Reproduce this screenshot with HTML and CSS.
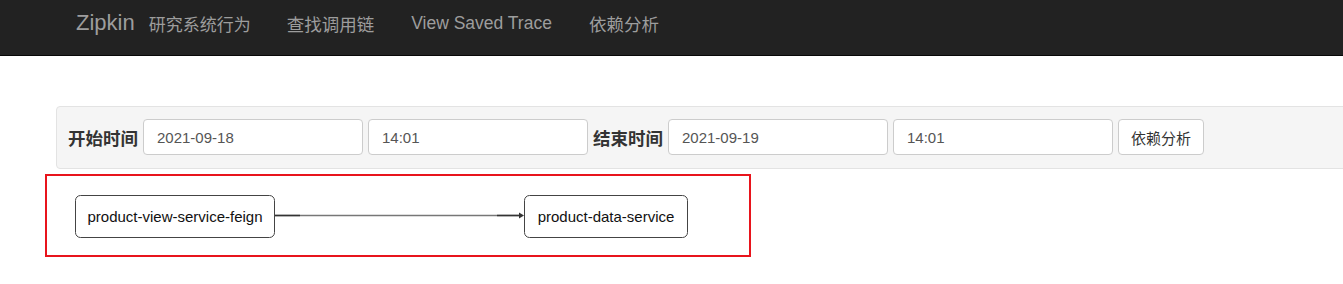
FILE: index.html
```html
<!DOCTYPE html>
<html lang="zh-CN">
<head>
    <meta charset="UTF-8">
    <title>Zipkin - 依赖分析</title>
    <link rel="stylesheet" href="styles.css">
</head>
<body>
<div class="navbar">
    <a class="brand" href="#">Zipkin</a>
    <span class="brand-sub">研究系统行为</span>
    <a class="nav-link" href="#">查找调用链</a>
    <a class="nav-link" href="#">View Saved Trace</a>
    <a class="nav-link" href="#">依赖分析</a>
</div>

<div class="filter-panel">
    <label class="filter-label">开始时间</label>
    <input class="filter-input" type="text" value="2021-09-18">
    <input class="filter-input" type="text" value="14:01">
    <label class="filter-label">结束时间</label>
    <input class="filter-input" type="text" value="2021-09-19">
    <input class="filter-input" type="text" value="14:01">
    <button class="filter-button">依赖分析</button>
</div>

<div class="graph-box">
    <svg class="graph" width="702" height="79" viewBox="0 0 702 79">
        <!-- edge -->
        <line x1="228" y1="39.5" x2="473" y2="39.5" stroke="#777" stroke-width="1.5"/>
        <line x1="228" y1="39.5" x2="253" y2="39.5" stroke="#333" stroke-width="1.5"/>
        <line x1="450" y1="39.5" x2="473" y2="39.5" stroke="#333" stroke-width="1.5"/>
        <path d="M472 36.5 L477 39.5 L472 42.5 Z" fill="#333"/>
        <!-- nodes -->
        <rect x="28.5" y="19.5" width="199" height="42" rx="5" fill="#fff" stroke="#444"/>
        <text x="128" y="46" text-anchor="middle">product-view-service-feign</text>
        <rect x="477.5" y="19.5" width="163" height="42" rx="5" fill="#fff" stroke="#444"/>
        <text x="559" y="46" text-anchor="middle">product-data-service</text>
    </svg>
</div>
</body>
</html>
```

FILE: styles.css
```css
body {
    margin: 0;
    font-family: "Liberation Sans", "Noto Sans CJK SC", sans-serif;
    color: #333;
    background-color: #fff;
    overflow-x: hidden;
}

.navbar {
    display: flex;
    align-items: center;
    box-sizing: border-box;
    height: 56px;
    padding: 0 0 9px 76px;
    background-color: #222;
    border-bottom: 1px solid #080808;
}
.brand {
    font-size: 22px;
    color: #9d9d9d;
    text-decoration: none;
    margin-right: 14px;
}
.brand-sub {
    font-size: 17px;
    color: #9d9d9d;
    margin-right: 36px;
}
.nav-link {
    font-size: 17.5px;
    color: #9d9d9d;
    text-decoration: none;
    margin-right: 37px;
}

.filter-panel {
    display: flex;
    align-items: center;
    gap: 5px;
    margin: 50px -20px 0 56px;
    padding: 12px 11px 13px 11px;
    background-color: #f5f5f5;
    border: 1px solid #e3e3e3;
    border-radius: 4px;
}
.filter-label {
    width: 70px;
    white-space: nowrap;
    font-size: 17.5px;
    font-weight: bold;
    color: #333;
}
.filter-input {
    box-sizing: border-box;
    width: 220px;
    height: 36px;
    padding: 6px 13px;
    font-family: inherit;
    font-size: 15px;
    color: #555;
    background-color: #fff;
    border: 1px solid #ccc;
    border-radius: 4px;
    outline: none;
}
.filter-button {
    box-sizing: border-box;
    height: 36px;
    padding: 6px 12px;
    font-family: inherit;
    font-size: 15px;
    color: #333;
    background-color: #fff;
    border: 1px solid #ccc;
    border-radius: 4px;
}

.graph-box {
    width: 702px;
    height: 79px;
    margin: 5px 0 0 45px;
    border: 2px solid #e8141c;
}
.graph {
    display: block;
}
.graph text {
    font-family: "Liberation Sans", sans-serif;
    font-size: 15px;
    fill: #111;
}
```
